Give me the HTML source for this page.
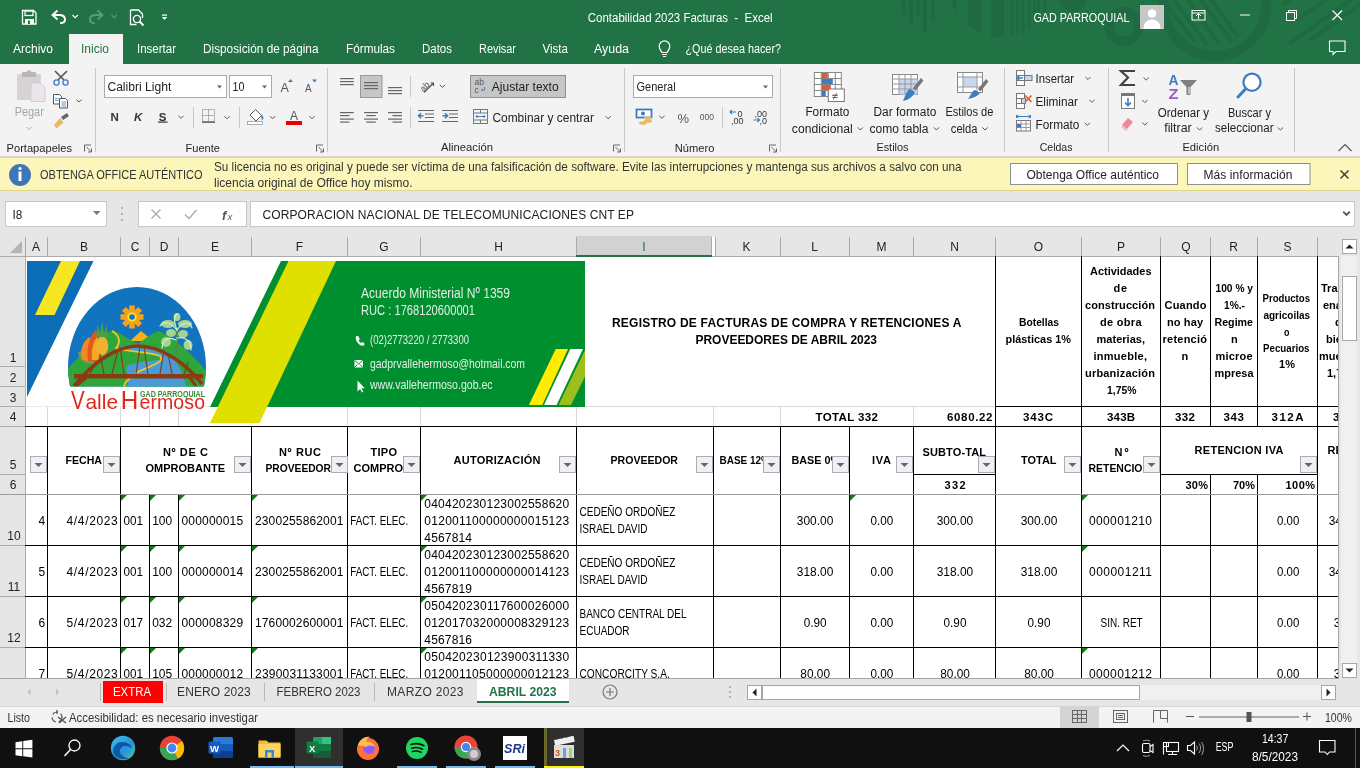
<!DOCTYPE html>
<html><head><meta charset="utf-8"><style>
html,body{margin:0;padding:0;width:1360px;height:768px;overflow:hidden;background:#fff}
svg{display:block;will-change:transform}
text{white-space:pre}
</style></head><body>
<svg width="1360" height="768" viewBox="0 0 1360 768">
<defs><clipPath id="cF"><rect x="252" y="426" width="79" height="68"/></clipPath><clipPath id="gridclip"><rect x="0" y="256" width="1338" height="422"/></clipPath></defs>
<rect x="0" y="0" width="1360" height="64" fill="#217346" />
<rect x="0" y="64" width="1360" height="92" fill="#f3f3f3" />
<rect x="0" y="156" width="1360" height="1" fill="#d8d8d8" />
<rect x="0" y="157" width="1360" height="34" fill="#fcf6bb" />
<rect x="0" y="157" width="1360" height="1" fill="#ddd590" />
<rect x="0" y="190" width="1360" height="1" fill="#ddd590" />
<rect x="0" y="191" width="1360" height="45" fill="#e6e6e6" />
<rect x="0" y="236" width="1339" height="20" fill="#e6e6e6" />
<rect x="25" y="256" width="1313" height="422" fill="#ffffff" />
<rect x="0" y="256" width="25" height="422" fill="#e6e6e6" />
<rect x="1338" y="236" width="22" height="442" fill="#e6e6e6" />
<rect x="0" y="678" width="1360" height="28" fill="#e6e6e6" />
<rect x="0" y="706" width="1360" height="22" fill="#f3f3f3" />
<rect x="0" y="728" width="1360" height="40" fill="#101010" />
<defs><clipPath id="tbclip"><rect x="0" y="0" width="1360" height="64"/></clipPath></defs>
<g clip-path="url(#tbclip)">
<circle cx="1215" cy="5" r="51" fill="none" stroke="#1f6943" stroke-width="10"/>
<circle cx="1123.5" cy="26.5" r="14.7" fill="none" stroke="#1f6943" stroke-width="9.4"/>
<g stroke="#1f6943" stroke-width="4">
<line x1="1167.8" y1="6.2" x2="1194.8" y2="41.7"/>
<line x1="1171.7" y1="-4" x2="1207" y2="44.8"/>
<line x1="1185.6" y1="-4" x2="1219.5" y2="44.8"/>
<line x1="1198" y1="-4" x2="1231.8" y2="41.7"/>
<line x1="1208.8" y1="-4" x2="1238" y2="37"/>
<line x1="1283" y1="5" x2="1294" y2="-3"/>
<line x1="1297" y1="20" x2="1328" y2="-2"/>
<line x1="1289" y1="44" x2="1352" y2="-1"/>
<line x1="1310" y1="40" x2="1365" y2="1"/>
</g>
<rect x="902" y="0" width="3.3999999999999773" height="15.4" fill="#1f6943" />
<rect x="909.3" y="0" width="3.6000000000000227" height="22.9" fill="#1f6943" />
<rect x="916.3" y="0" width="3.300000000000068" height="16.7" fill="#1f6943" />
<rect x="922.9" y="0" width="4.100000000000023" height="31.7" fill="#1f6943" />
<rect x="931.4" y="0" width="3.3999999999999773" height="19.8" fill="#1f6943" />
<rect x="991" y="0" width="13" height="37" fill="#1f6943" />
<rect x="1011" y="0" width="2.5" height="35.5" fill="#1f6943" />
<rect x="1016" y="0" width="2" height="34.7" fill="#1f6943" />
<rect x="1022" y="0" width="2.2999999999999545" height="32.4" fill="#1f6943" />
<rect x="1028" y="0" width="2.5" height="29.3" fill="#1f6943" />
<rect x="1033" y="0" width="2.5" height="24.7" fill="#1f6943" />
<rect x="1037.5" y="0" width="2.5" height="21.6" fill="#1f6943" />
<rect x="1043.5" y="0" width="2.5" height="13.9" fill="#1f6943" />
<rect x="1049" y="0" width="1.5" height="3" fill="#1f6943" />
<path d="M950.2 0L956.4 13.1V0Z" fill="#1f6943"/>
<path d="M968 0H981V32.4L968 25.5Z" fill="#1f6943"/>
<circle cx="1073" cy="-2" r="13.6" fill="#1f6943"/>
</g>
<path d="M22.5 10.5h11l2.5 2.5v11h-13.5z" fill="none" stroke="#fff" stroke-width="1.3"/><rect x="25" y="11" width="8" height="4.5" fill="none" stroke="#fff" stroke-width="1.2"/><rect x="25" y="19" width="9" height="5" fill="#fff"/><rect x="28" y="20.5" width="2" height="3.5" fill="#217346"/>
<path d="M57.5 10.5L52.5 15L57.5 19.5M53 15H59C63 15 65 17 65 19.5C65 22 63 23.2 60 23.2" fill="none" stroke="#fff" stroke-width="1.9"/>
<path d="M72.5 15l2.7 2.7 2.7-2.7" fill="none" stroke="#fff" stroke-width="1.1"/>
<path d="M97.5 10.5L102.5 15L97.5 19.5M102 15H96C92 15 90 17 90 19.5C90 22 92 23.2 95 23.2" fill="none" stroke="#5a9a74" stroke-width="1.9"/>
<path d="M111.5 15l2.7 2.7 2.7-2.7" fill="none" stroke="#5a9a74" stroke-width="1.1"/>
<path d="M130.5 10h8l4 4v4M130.5 10v14.5h6" fill="none" stroke="#fff" stroke-width="1.3"/><circle cx="137" cy="19" r="3.6" fill="none" stroke="#fff" stroke-width="1.4"/><path d="M139.5 21.5l4 4" stroke="#fff" stroke-width="1.8"/>
<rect x="162" y="14.5" width="5" height="1.2" fill="#fff"/><path d="M161.8 17h5.4l-2.7 3z" fill="#fff"/>
<text x="587.8" y="21.8" font-family="Liberation Sans" font-size="12" fill="#ffffff" text-anchor="start" textLength="184.8" lengthAdjust="spacingAndGlyphs" >Contabilidad 2023 Facturas  -  Excel</text>
<text x="1033.5" y="21.9" font-family="Liberation Sans" font-size="12" fill="#ffffff" text-anchor="start" textLength="96.0" lengthAdjust="spacingAndGlyphs" >GAD PARROQUIAL</text>
<rect x="1140" y="5" width="24" height="24" fill="#c6c6c6" />
<circle cx="1152" cy="13.5" r="4.2" fill="#fff"/><path d="M1143.5 29c0-6 3.5-9.5 8.5-9.5s8.5 3.5 8.5 9.5z" fill="#fff"/>
<rect x="1192" y="10.5" width="13" height="9.5" fill="none" stroke="#fff" stroke-width="1"/><path d="M1192 13h13" stroke="#fff"/><path d="M1198.5 19v-5M1196 16l2.5-2.5 2.5 2.5" fill="none" stroke="#fff" stroke-width="1"/>
<rect x="1240" y="14.5" width="10" height="1" fill="#ffffff" />
<rect x="1286.5" y="12.5" width="8" height="8" fill="none" stroke="#fff" stroke-width="1"/><path d="M1288.5 12.5v-2h8v8h-2" fill="none" stroke="#fff" stroke-width="1"/>
<path d="M1332.5 10.5l9.5 9.5M1342 10.5l-9.5 9.5" stroke="#fff" stroke-width="1.1"/>
<path d="M1329.5 41h15.5v10.5h-9l-3 3v-3h-3.5z" fill="none" stroke="#fff" stroke-width="1.1"/>
<rect x="69" y="34" width="54" height="30" fill="#f3f3f3" />
<text x="13.0" y="53.3" font-family="Liberation Sans" font-size="12.5" fill="#ffffff" textLength="40.0" lengthAdjust="spacingAndGlyphs" >Archivo</text>
<text x="137.0" y="53.3" font-family="Liberation Sans" font-size="12.5" fill="#ffffff" textLength="39.0" lengthAdjust="spacingAndGlyphs" >Insertar</text>
<text x="203.0" y="53.3" font-family="Liberation Sans" font-size="12.5" fill="#ffffff" textLength="115.5" lengthAdjust="spacingAndGlyphs" >Disposición de página</text>
<text x="346.0" y="53.3" font-family="Liberation Sans" font-size="12.5" fill="#ffffff" textLength="49.0" lengthAdjust="spacingAndGlyphs" >Fórmulas</text>
<text x="422.0" y="53.3" font-family="Liberation Sans" font-size="12.5" fill="#ffffff" textLength="30.0" lengthAdjust="spacingAndGlyphs" >Datos</text>
<text x="479.0" y="53.3" font-family="Liberation Sans" font-size="12.5" fill="#ffffff" textLength="37.0" lengthAdjust="spacingAndGlyphs" >Revisar</text>
<text x="542.5" y="53.3" font-family="Liberation Sans" font-size="12.5" fill="#ffffff" textLength="25.5" lengthAdjust="spacingAndGlyphs" >Vista</text>
<text x="594.0" y="53.3" font-family="Liberation Sans" font-size="12.5" fill="#ffffff" textLength="35.0" lengthAdjust="spacingAndGlyphs" >Ayuda</text>
<text x="685.5" y="53.3" font-family="Liberation Sans" font-size="12.5" fill="#ffffff" textLength="95.5" lengthAdjust="spacingAndGlyphs" >¿Qué desea hacer?</text>
<text x="81.0" y="53.3" font-family="Liberation Sans" font-size="12.5" fill="#217346" textLength="28.0" lengthAdjust="spacingAndGlyphs" >Inicio</text>
<path d="M662 52.5c-1-2-2.8-3.5-2.8-6.3a5.3 5.3 0 0 1 10.6 0c0 2.8-1.8 4.3-2.8 6.3z" fill="none" stroke="#fff" stroke-width="1.2"/><path d="M662 54.5h5M663 56.5h3" stroke="#fff" stroke-width="1.1"/>
<rect x="95" y="68" width="1" height="84" fill="#c8c8c8" />
<rect x="327" y="68" width="1" height="84" fill="#c8c8c8" />
<rect x="624" y="68" width="1" height="84" fill="#c8c8c8" />
<rect x="780" y="68" width="1" height="84" fill="#c8c8c8" />
<rect x="1004" y="68" width="1" height="84" fill="#c8c8c8" />
<rect x="1108" y="68" width="1" height="84" fill="#c8c8c8" />
<rect x="1294" y="68" width="1" height="84" fill="#c8c8c8" />
<path d="M84.5 151.5v-6.5h6.5M86.5 147.0l5 5M88 152.0h3.5v-3.5" fill="none" stroke="#666" stroke-width="1"/>
<path d="M316.5 151.5v-6.5h6.5M318.5 147.0l5 5M320 152.0h3.5v-3.5" fill="none" stroke="#666" stroke-width="1"/>
<path d="M613.5 151.5v-6.5h6.5M615.5 147.0l5 5M617 152.0h3.5v-3.5" fill="none" stroke="#666" stroke-width="1"/>
<path d="M769.5 151.5v-6.5h6.5M771.5 147.0l5 5M773 152.0h3.5v-3.5" fill="none" stroke="#666" stroke-width="1"/>
<text x="6.6" y="151.5" font-family="Liberation Sans" font-size="11.3" fill="#262626" textLength="65.4" lengthAdjust="spacingAndGlyphs" >Portapapeles</text>
<text x="185.5" y="151.5" font-family="Liberation Sans" font-size="11.3" fill="#262626" textLength="34.5" lengthAdjust="spacingAndGlyphs" >Fuente</text>
<text x="441.0" y="151.3" font-family="Liberation Sans" font-size="11.3" fill="#262626" textLength="52.0" lengthAdjust="spacingAndGlyphs" >Alineación</text>
<text x="674.8" y="151.5" font-family="Liberation Sans" font-size="11.3" fill="#262626" textLength="39.6" lengthAdjust="spacingAndGlyphs" >Número</text>
<text x="876.4" y="151.0" font-family="Liberation Sans" font-size="11.3" fill="#262626" textLength="32.1" lengthAdjust="spacingAndGlyphs" >Estilos</text>
<text x="1039.7" y="151.3" font-family="Liberation Sans" font-size="11.3" fill="#262626" textLength="32.8" lengthAdjust="spacingAndGlyphs" >Celdas</text>
<text x="1182.4" y="151.2" font-family="Liberation Sans" font-size="11.3" fill="#262626" textLength="36.8" lengthAdjust="spacingAndGlyphs" >Edición</text>
<rect x="17" y="74" width="24" height="26" rx="1.5" fill="#d6d2d6"/><rect x="22" y="72" width="14" height="5" rx="1" fill="#bcb6bc"/><rect x="27" y="70.5" width="4" height="3" fill="#bcb6bc"/>
<path d="M31 83h9.5l4.5 4.5v14H31z" fill="#ece6ec" stroke="#d3cdd3" stroke-width="1"/>
<text x="14.7" y="116.2" font-family="Liberation Sans" font-size="12.5" fill="#a6a6a6" textLength="29.1" lengthAdjust="spacingAndGlyphs" >Pegar</text>
<path d="M26.5 127l2.6 2.6 2.6-2.6" fill="none" stroke="#b0b0b0" stroke-width="1"/>
<path d="M55 71l9 9M67 71l-9 9" stroke="#555" stroke-width="1.6"/><circle cx="56.5" cy="82.5" r="2.6" fill="none" stroke="#3d7dc0" stroke-width="1.3"/><circle cx="65.5" cy="82.5" r="2.6" fill="none" stroke="#3d7dc0" stroke-width="1.3"/>
<path d="M53.5 94.5h6l2 2v7.5h-8z" fill="#fff" stroke="#555" stroke-width="1"/><path d="M59.5 98.5h6l2 2v7.5h-8z" fill="#fff" stroke="#555" stroke-width="1"/><path d="M55 98.5h3.5M55 100.5h3.5M61.5 102h4.5M61.5 104h4.5M61.5 106h4.5" stroke="#3d7dc0" stroke-width="0.8"/>
<path d="M76.5 99.5l2.6 2.6 2.6-2.6" fill="none" stroke="#555" stroke-width="1"/>
<path d="M61 117l6-4 2 3-6 4z" fill="#666"/><path d="M54 125l6-7 3.5 4.5-7 6z" fill="#e8b96a"/>
<rect x="104.5" y="75.5" width="122" height="22" fill="#fff" stroke="#aaa" stroke-width="1"/>
<text x="107.4" y="90.5" font-family="Liberation Sans" font-size="12.5" fill="#222" textLength="63.9" lengthAdjust="spacingAndGlyphs" >Calibri Light</text>
<path d="M217 85.5h5l-2.5 3z" fill="#666"/>
<rect x="229.5" y="75.5" width="42" height="22" fill="#fff" stroke="#aaa" stroke-width="1"/>
<text x="232.5" y="90.6" font-family="Liberation Sans" font-size="12.5" fill="#222" textLength="11.9" lengthAdjust="spacingAndGlyphs" >10</text>
<path d="M262 85.5h5l-2.5 3z" fill="#666"/>
<text x="280.6" y="91.8" font-family="Liberation Sans" font-size="12.5" fill="#555" textLength="8.8" lengthAdjust="spacing" >A</text>
<path d="M288 82h5l-2.5-3z" fill="#3d7dc0"/>
<text x="305.0" y="91.8" font-family="Liberation Sans" font-size="10" fill="#555" textLength="7.5" lengthAdjust="spacing" >A</text>
<path d="M312 79.5h5l-2.5 3z" fill="#3d7dc0"/>
<text x="110.6" y="120.6" font-family="Liberation Sans" font-size="11.5" fill="#333" font-weight="bold" textLength="8.8" lengthAdjust="spacing" >N</text>
<text x="134.0" y="120.6" font-family="Liberation Sans" font-size="11.5" fill="#333" font-weight="bold" textLength="8.4" lengthAdjust="spacing" font-style="italic">K</text>
<text x="158.8" y="120.6" font-family="Liberation Sans" font-size="11.5" fill="#333" font-weight="bold" textLength="8.2" lengthAdjust="spacing" >S</text>
<rect x="158" y="121.5" width="9.5" height="1.2" fill="#333" />
<path d="M178.4 115.8l2.6 2.6 2.6-2.6" fill="none" stroke="#555" stroke-width="1"/>
<rect x="193" y="107" width="1" height="21" fill="#c8c8c8" />
<rect x="239" y="107" width="1" height="21" fill="#c8c8c8" />
<rect x="202.5" y="109.5" width="12" height="12" fill="none" stroke="#777" stroke-width="1" stroke-dasharray="1 1"/><path d="M208.5 109.5v12M202.5 115.5h12" stroke="#777" stroke-width="1" stroke-dasharray="1 1"/><rect x="202" y="121.5" width="13" height="1.3" fill="#555"/>
<path d="M224.4 116.2l2.6 2.6 2.6-2.6" fill="none" stroke="#555" stroke-width="1"/>
<path d="M250 115l5.5-5.5 6 6-5.5 5.5z" fill="#fff" stroke="#555" stroke-width="1"/><path d="M261.5 115.5c1 1 1.5 2.5.5 4" stroke="#3d7dc0" stroke-width="1.6" fill="none"/><rect x="247.5" y="121.5" width="15" height="3" fill="#fff" stroke="#999" stroke-width="0.8"/>
<path d="M270 116.2l2.6 2.6 2.6-2.6" fill="none" stroke="#555" stroke-width="1"/>
<text x="290.0" y="120.0" font-family="Liberation Sans" font-size="12" fill="#555" textLength="8.8" lengthAdjust="spacing" >A</text>
<rect x="286" y="121" width="16" height="4" fill="#ee0000" />
<path d="M309.4 116.2l2.6 2.6 2.6-2.6" fill="none" stroke="#555" stroke-width="1"/>
<rect x="340" y="78" width="13.75" height="1.2" fill="#666" />
<rect x="340" y="81" width="13.75" height="1.2" fill="#666" />
<rect x="340" y="84" width="13.75" height="1.2" fill="#666" />
<rect x="360.5" y="75.5" width="21.5" height="22" fill="#c6c6c6" stroke="#999" stroke-width="1"/>
<rect x="364" y="82" width="14" height="1.2" fill="#666" />
<rect x="364" y="85" width="14" height="1.2" fill="#666" />
<rect x="364" y="88" width="14" height="1.2" fill="#666" />
<rect x="388" y="87" width="14" height="1.2" fill="#666" />
<rect x="388" y="90" width="14" height="1.2" fill="#666" />
<rect x="388" y="93" width="14" height="1.2" fill="#666" />
<rect x="410" y="76" width="1" height="21" fill="#c8c8c8" />
<rect x="410" y="107" width="1" height="21" fill="#c8c8c8" />
<text x="419" y="90" font-family="Liberation Sans" font-size="9" fill="#555" transform="rotate(-45 424 86)">ab</text><path d="M424 92.5l9.5-9.5M430.5 83h3v3" fill="none" stroke="#555" stroke-width="1.2"/>
<path d="M439.8 84.8l2.6 2.6 2.6-2.6" fill="none" stroke="#555" stroke-width="1"/>
<rect x="340" y="112" width="13.75" height="1.2" fill="#666" />
<rect x="340" y="115" width="9.5" height="1.2" fill="#666" />
<rect x="340" y="118.5" width="13.75" height="1.2" fill="#666" />
<rect x="340" y="121.5" width="9.5" height="1.2" fill="#666" />
<rect x="364.0" y="112" width="14" height="1.2" fill="#666" />
<rect x="388" y="112" width="14" height="1.2" fill="#666" />
<rect x="366.25" y="115" width="9.5" height="1.2" fill="#666" />
<rect x="392.5" y="115" width="9.5" height="1.2" fill="#666" />
<rect x="364.0" y="118.5" width="14" height="1.2" fill="#666" />
<rect x="388" y="118.5" width="14" height="1.2" fill="#666" />
<rect x="366.25" y="121.5" width="9.5" height="1.2" fill="#666" />
<rect x="392.5" y="121.5" width="9.5" height="1.2" fill="#666" />
<path d="M418 110.5h16M425 114h9M425 117.5h9M418 121.5h16" stroke="#666" stroke-width="1.2"/><path d="M418.5 115.8h5M421 113.3l-2.5 2.5 2.5 2.5" fill="none" stroke="#3d7dc0" stroke-width="1.6"/>
<path d="M442 110.5h16M449 114h9M449 117.5h9M442 121.5h16" stroke="#666" stroke-width="1.2"/><path d="M442.5 115.8h5M445 113.3l2.5 2.5-2.5 2.5" fill="none" stroke="#3d7dc0" stroke-width="1.6"/>
<rect x="470.5" y="75.5" width="95" height="22" fill="#c6c6c6" stroke="#8f8f8f" stroke-width="1"/>
<text x="474.5" y="85" font-family="Liberation Sans" font-size="8.5" fill="#555">ab</text><text x="474.5" y="92.5" font-family="Liberation Sans" font-size="8.5" fill="#555">c</text><path d="M484.5 87v3h-3M482.5 89l-1 1 1 1" fill="none" stroke="#3d7dc0" stroke-width="0.9"/>
<text x="491.8" y="90.5" font-family="Liberation Sans" font-size="12.5" fill="#222" textLength="66.8" lengthAdjust="spacingAndGlyphs" >Ajustar texto</text>
<rect x="473.5" y="109.5" width="14" height="14" fill="none" stroke="#777" stroke-width="1"/><path d="M473.5 113h14M473.5 120h14M480.5 109.5v3.5M480.5 120v3.5" stroke="#777" stroke-width="1"/><path d="M476 116.5h9M477.5 115l-1.5 1.5 1.5 1.5M483.5 115l1.5 1.5-1.5 1.5" fill="none" stroke="#3d7dc0" stroke-width="1"/>
<text x="492.4" y="121.6" font-family="Liberation Sans" font-size="12.5" fill="#222" textLength="101.6" lengthAdjust="spacingAndGlyphs" >Combinar y centrar</text>
<path d="M605.6 116.3l2.6 2.6 2.6-2.6" fill="none" stroke="#555" stroke-width="1"/>
<rect x="633.5" y="75.5" width="139" height="22" fill="#fff" stroke="#aaa" stroke-width="1"/>
<text x="636.5" y="90.6" font-family="Liberation Sans" font-size="12.5" fill="#222" textLength="39.1" lengthAdjust="spacingAndGlyphs" >General</text>
<path d="M763 85.5h5l-2.5 3z" fill="#666"/>
<rect x="636.5" y="109.5" width="15" height="8" fill="#fff" stroke="#3d7dc0" stroke-width="1.8"/><circle cx="643" cy="113.5" r="2" fill="#3d7dc0"/><ellipse cx="648" cy="118" rx="4" ry="1.8" fill="#e8b96a"/><ellipse cx="648" cy="121" rx="4" ry="1.8" fill="#e8b96a"/><ellipse cx="643" cy="123" rx="4" ry="1.8" fill="#e8b96a"/>
<path d="M659.4 115.8l2.6 2.6 2.6-2.6" fill="none" stroke="#555" stroke-width="1"/>
<text x="677.5" y="122.7" font-family="Liberation Sans" font-size="13" fill="#555" textLength="12.5" lengthAdjust="spacing" >%</text>
<text x="699.8" y="120.0" font-family="Liberation Sans" font-size="9.5" fill="#555" textLength="14.2" lengthAdjust="spacingAndGlyphs" >000</text>
<rect x="722" y="107" width="1" height="21" fill="#c8c8c8" />
<path d="M730 112h6M732 110l-2 2 2 2" fill="none" stroke="#3d7dc0" stroke-width="1.2"/>
<text x="737.5" y="117.0" font-family="Liberation Sans" font-size="9" fill="#333" text-anchor="start" >0</text>
<text x="731.0" y="124.0" font-family="Liberation Sans" font-size="9" fill="#333" text-anchor="start" >,00</text>
<text x="754.5" y="116.5" font-family="Liberation Sans" font-size="9" fill="#333" text-anchor="start" >,00</text>
<text x="759.5" y="124.0" font-family="Liberation Sans" font-size="9" fill="#333" text-anchor="start" >,0</text>
<path d="M753.5 120h6M757.5 118l2 2-2 2" fill="none" stroke="#3d7dc0" stroke-width="1.2"/>
<g transform="translate(813.8 72)"><rect x="0.5" y="0.5" width="27" height="24" fill="#fff" stroke="#888" stroke-width="1"/><path d="M0.5 6.5h27M0.5 12.5h27M0.5 18.5h27M7.5 0.5v24M14.5 0.5v24M21.5 0.5v24" stroke="#888" stroke-width="1"/><rect x="8" y="1" width="6" height="5" fill="#e05a36"/><rect x="8" y="7" width="11" height="5" fill="#3d7dc0"/><rect x="8" y="13" width="9" height="5" fill="#e05a36"/><rect x="8" y="19" width="4" height="5" fill="#3d7dc0"/><rect x="14.5" y="17" width="16" height="12.5" fill="#fff" stroke="#777" stroke-width="1"/><text x="18" y="27.5" font-family="Liberation Sans" font-size="11" fill="#444">≠</text></g>
<g transform="translate(892 74)"><rect x="0.5" y="0.5" width="25" height="20" fill="#fff" stroke="#888"/><rect x="7" y="5" width="18.5" height="15.5" fill="#c5d8ee"/><path d="M0.5 5h25M0.5 10h25M0.5 15h25M7 0.5v20M13 0.5v20M19 0.5v20" stroke="#999" stroke-width="1"/><path d="M29 4l-8 10 2.5 2.5 8-10z" fill="#777"/><path d="M18 15c-3 1-4 5-7 12 5-1 10-4 12-9z" fill="#3d7dc0"/></g>
<g transform="translate(957 72)"><rect x="0.5" y="0.5" width="25" height="20" fill="#fff" stroke="#888"/><rect x="6" y="5" width="14" height="10" fill="#c5d8ee"/><path d="M0.5 5h25M0.5 15h25M6 0.5v20M20 0.5v20" stroke="#999" stroke-width="1"/><path d="M29 7l-8 10 2.5 2.5 8-10z" fill="#777"/><path d="M18 18c-3 1-4 5-7 9 5-1 10-3 12-6z" fill="#3d7dc0"/></g>
<text x="805.4" y="116.4" font-family="Liberation Sans" font-size="12.5" fill="#222" textLength="43.9" lengthAdjust="spacingAndGlyphs" >Formato</text>
<text x="791.8" y="132.5" font-family="Liberation Sans" font-size="12.5" fill="#222" textLength="60.9" lengthAdjust="spacingAndGlyphs" >condicional</text>
<path d="M857.8 127.4l2.6 2.6 2.6-2.6" fill="none" stroke="#555" stroke-width="1"/>
<text x="873.4" y="116.4" font-family="Liberation Sans" font-size="12.5" fill="#222" textLength="63.0" lengthAdjust="spacingAndGlyphs" >Dar formato</text>
<text x="869.6" y="132.5" font-family="Liberation Sans" font-size="12.5" fill="#222" textLength="58.9" lengthAdjust="spacingAndGlyphs" >como tabla</text>
<path d="M933.8 127.4l2.6 2.6 2.6-2.6" fill="none" stroke="#555" stroke-width="1"/>
<text x="945.4" y="116.4" font-family="Liberation Sans" font-size="12.5" fill="#222" textLength="48.0" lengthAdjust="spacingAndGlyphs" >Estilos de</text>
<text x="950.8" y="132.5" font-family="Liberation Sans" font-size="12.5" fill="#222" textLength="26.7" lengthAdjust="spacingAndGlyphs" >celda</text>
<path d="M982.4 127.4l2.6 2.6 2.6-2.6" fill="none" stroke="#555" stroke-width="1"/>
<g stroke="#777" stroke-width="1" fill="#fff"><rect x="1016.5" y="70.5" width="8" height="5"/><rect x="1016.5" y="75.5" width="8" height="5"/><rect x="1016.5" y="80.5" width="8" height="5"/><rect x="1024.5" y="75.5" width="7.5" height="5" fill="#c5d8ee"/></g><path d="M1017 78h6M1019.5 75.5l-2.5 2.5 2.5 2.5" fill="none" stroke="#3d7dc0" stroke-width="1.5"/>
<text x="1035.5" y="82.5" font-family="Liberation Sans" font-size="12.5" fill="#222" textLength="38.5" lengthAdjust="spacingAndGlyphs" >Insertar</text>
<path d="M1085.4 77l2.6 2.6 2.6-2.6" fill="none" stroke="#555" stroke-width="1"/>
<g stroke="#777" stroke-width="1" fill="#fff"><rect x="1016.5" y="93.5" width="8" height="5"/><rect x="1016.5" y="98.5" width="8" height="5"/><rect x="1016.5" y="103.5" width="8" height="5"/><rect x="1021.5" y="98.5" width="4" height="5" fill="#c5d8ee"/></g><path d="M1025 95.5l6.5 6.5M1031.5 95.5l-6.5 6.5" stroke="#e05a36" stroke-width="1.6"/>
<text x="1035.5" y="105.7" font-family="Liberation Sans" font-size="12.5" fill="#222" textLength="42.5" lengthAdjust="spacingAndGlyphs" >Eliminar</text>
<path d="M1089.3 99.8l2.6 2.6 2.6-2.6" fill="none" stroke="#555" stroke-width="1"/>
<g stroke="#777" stroke-width="1" fill="#fff"><rect x="1016.5" y="120.5" width="14" height="10.5"/></g><path d="M1016.5 124h14M1016.5 127.5h14M1021 120.5v10.5M1026 120.5v10.5" stroke="#999"/><rect x="1017" y="124" width="4" height="3.5" fill="#3d7dc0"/><path d="M1016.5 116.5h14M1018.5 115l-2 1.5 2 1.5M1028.5 115l2 1.5-2 1.5M1016.5 115v3M1030.5 115v3" fill="none" stroke="#3d7dc0" stroke-width="1"/>
<text x="1035.5" y="128.6" font-family="Liberation Sans" font-size="12.5" fill="#222" textLength="43.9" lengthAdjust="spacingAndGlyphs" >Formato</text>
<path d="M1084.7 122.8l2.6 2.6 2.6-2.6" fill="none" stroke="#555" stroke-width="1"/>
<path d="M1135 71h-14l7 6.5-7 7.5h14" fill="none" stroke="#444" stroke-width="2.2"/>
<path d="M1143.6 77.5l2.6 2.6 2.6-2.6" fill="none" stroke="#555" stroke-width="1"/>
<rect x="1121.5" y="93.5" width="13" height="15" fill="#fff" stroke="#777"/><rect x="1121" y="93" width="14" height="3" fill="#777"/><path d="M1128 98v7M1125 102.5l3 3 3-3" fill="none" stroke="#3d7dc0" stroke-width="1.6"/>
<path d="M1142.3 100l2.6 2.6 2.6-2.6" fill="none" stroke="#555" stroke-width="1"/>
<path d="M1128 118l5 4-6 7-5-4z" fill="#e88a9a"/><path d="M1121 127l5 4 1.5-1.5-5-4z" fill="#f2b8c2"/>
<path d="M1142.3 122.5l2.6 2.6 2.6-2.6" fill="none" stroke="#555" stroke-width="1"/>
<text x="1168.5" y="84.8" font-family="Liberation Sans" font-size="15.5" fill="#3d7dc0" font-weight="bold" text-anchor="start" textLength="10.0" lengthAdjust="spacingAndGlyphs" >A</text>
<text x="1168.5" y="98.7" font-family="Liberation Sans" font-size="15.5" fill="#9b59c6" font-weight="bold" text-anchor="start" textLength="10.0" lengthAdjust="spacingAndGlyphs" >Z</text>
<path d="M1180 80h17l-6.5 7v8h-4v-8z" fill="#808080"/><path d="M1189 87v7" stroke="#fff" stroke-width="1"/>
<text x="1157.7" y="116.5" font-family="Liberation Sans" font-size="12.5" fill="#222" textLength="51.3" lengthAdjust="spacingAndGlyphs" >Ordenar y</text>
<text x="1164.2" y="132.4" font-family="Liberation Sans" font-size="12.5" fill="#222" textLength="27.5" lengthAdjust="spacingAndGlyphs" >filtrar</text>
<path d="M1197 127.5l2.6 2.6 2.6-2.6" fill="none" stroke="#555" stroke-width="1"/>
<circle cx="1252" cy="82.2" r="8.6" fill="#fff" stroke="#3d7dc0" stroke-width="2.2"/><path d="M1245.5 89l-7.5 8" stroke="#3d7dc0" stroke-width="3" stroke-linecap="round"/>
<text x="1228.0" y="116.5" font-family="Liberation Sans" font-size="12.5" fill="#222" textLength="43.0" lengthAdjust="spacingAndGlyphs" >Buscar y</text>
<text x="1214.9" y="132.4" font-family="Liberation Sans" font-size="12.5" fill="#222" textLength="58.6" lengthAdjust="spacingAndGlyphs" >seleccionar</text>
<path d="M1277.8 127.5l2.6 2.6 2.6-2.6" fill="none" stroke="#555" stroke-width="1"/>
<path d="M1338.5 151l6.5-6.5 6.5 6.5" fill="none" stroke="#555" stroke-width="1.1"/>
<circle cx="20" cy="175" r="11" fill="#3e76ba"/><circle cx="20" cy="168.5" r="1.6" fill="#fff"/><rect x="18.5" y="171.5" width="3" height="9.5" fill="#fff"/>
<text x="40.0" y="179.0" font-family="Liberation Sans" font-size="12" fill="#333" textLength="162.5" lengthAdjust="spacingAndGlyphs" >OBTENGA OFFICE AUTÉNTICO</text>
<text x="214.0" y="171.3" font-family="Liberation Sans" font-size="12" fill="#333" textLength="747.5" lengthAdjust="spacingAndGlyphs" >Su licencia no es original y puede ser víctima de una falsificación de software. Evite las interrupciones y mantenga sus archivos a salvo con una</text>
<text x="214.0" y="187.3" font-family="Liberation Sans" font-size="12" fill="#333" textLength="198.5" lengthAdjust="spacing" >licencia original de Office hoy mismo.</text>
<rect x="1010.5" y="163.5" width="167" height="21" fill="#fff" stroke="#8f8f8f" stroke-width="1"/>
<text x="1026.5" y="179.0" font-family="Liberation Sans" font-size="12" fill="#222" textLength="132.5" lengthAdjust="spacingAndGlyphs" >Obtenga Office auténtico</text>
<rect x="1187.5" y="163.5" width="122.5" height="21" fill="#fff" stroke="#8f8f8f" stroke-width="1"/>
<text x="1203.5" y="179.0" font-family="Liberation Sans" font-size="12" fill="#222" textLength="89.0" lengthAdjust="spacing" >Más información</text>
<path d="M1340.5 170.5l8 8M1348.5 170.5l-8 8" stroke="#444" stroke-width="1.6"/>
<rect x="5.5" y="201.5" width="101" height="25" fill="#fff" stroke="#c6c6c6" stroke-width="1"/>
<text x="12.5" y="219.0" font-family="Liberation Sans" font-size="12" fill="#222" textLength="9.8" lengthAdjust="spacingAndGlyphs" >I8</text>
<path d="M93 211h7.5l-3.75 4z" fill="#777"/>
<circle cx="122" cy="208" r="0.9" fill="#999"/><circle cx="122" cy="214" r="0.9" fill="#999"/><circle cx="122" cy="220" r="0.9" fill="#999"/>
<rect x="138.5" y="201.5" width="108" height="25" fill="#fff" stroke="#c6c6c6" stroke-width="1"/>
<path d="M151.5 209.5l9 9M160.5 209.5l-9 9" stroke="#aaa" stroke-width="1.3"/><path d="M185 214.5l4 4 7.5-8.5" fill="none" stroke="#aaa" stroke-width="1.3"/>
<text x="222.0" y="219.5" font-family="Liberation Sans" font-size="13" fill="#555" text-anchor="start" font-style="italic" font-family="Liberation Serif" font-weight="bold">f</text>
<text x="227.5" y="219.5" font-family="Liberation Sans" font-size="9.5" fill="#555" text-anchor="start" font-style="italic">x</text>
<rect x="250.5" y="201.5" width="1104" height="25" fill="#fff" stroke="#c6c6c6" stroke-width="1"/>
<text x="262.5" y="218.5" font-family="Liberation Sans" font-size="12" fill="#222" textLength="371.5" lengthAdjust="spacing" >CORPORACION NACIONAL DE TELECOMUNICACIONES CNT EP</text>
<path d="M1343.2 211.6l3.3 3.4 3.3-3.4" fill="none" stroke="#555" stroke-width="1.8"/>
<path d="M10 253h12v-12z" fill="#b4b4b4"/>
<rect x="576" y="236" width="136" height="20" fill="#d2d2d2" />
<rect x="25" y="237" width="1" height="19" fill="#ababab" />
<rect x="47" y="237" width="1" height="19" fill="#ababab" />
<rect x="120" y="237" width="1" height="19" fill="#ababab" />
<rect x="149" y="237" width="1" height="19" fill="#ababab" />
<rect x="178" y="237" width="1" height="19" fill="#ababab" />
<rect x="251" y="237" width="1" height="19" fill="#ababab" />
<rect x="347" y="237" width="1" height="19" fill="#ababab" />
<rect x="420" y="237" width="1" height="19" fill="#ababab" />
<rect x="576" y="237" width="1" height="19" fill="#ababab" />
<rect x="711" y="237" width="1" height="19" fill="#ababab" />
<rect x="715" y="237" width="1" height="19" fill="#ababab" />
<rect x="780" y="237" width="1" height="19" fill="#ababab" />
<rect x="849" y="237" width="1" height="19" fill="#ababab" />
<rect x="913" y="237" width="1" height="19" fill="#ababab" />
<rect x="995" y="237" width="1" height="19" fill="#ababab" />
<rect x="1081" y="237" width="1" height="19" fill="#ababab" />
<rect x="1160" y="237" width="1" height="19" fill="#ababab" />
<rect x="1210" y="237" width="1" height="19" fill="#ababab" />
<rect x="1257" y="237" width="1" height="19" fill="#ababab" />
<rect x="1317" y="237" width="1" height="19" fill="#ababab" />
<rect x="712" y="237" width="3" height="19" fill="#ffffff" />
<rect x="711" y="237" width="1" height="19" fill="#ababab" />
<rect x="715" y="237" width="1" height="19" fill="#ababab" />
<rect x="0" y="256" width="1339" height="1" fill="#ababab" />
<rect x="576" y="255" width="136" height="2" fill="#217346" />
<text x="36.0" y="251.0" font-family="Liberation Sans" font-size="12" fill="#222" text-anchor="middle" >A</text>
<text x="84.0" y="251.0" font-family="Liberation Sans" font-size="12" fill="#222" text-anchor="middle" >B</text>
<text x="135.0" y="251.0" font-family="Liberation Sans" font-size="12" fill="#222" text-anchor="middle" >C</text>
<text x="164.0" y="251.0" font-family="Liberation Sans" font-size="12" fill="#222" text-anchor="middle" >D</text>
<text x="215.0" y="251.0" font-family="Liberation Sans" font-size="12" fill="#222" text-anchor="middle" >E</text>
<text x="299.5" y="251.0" font-family="Liberation Sans" font-size="12" fill="#222" text-anchor="middle" >F</text>
<text x="384.0" y="251.0" font-family="Liberation Sans" font-size="12" fill="#222" text-anchor="middle" >G</text>
<text x="498.5" y="251.0" font-family="Liberation Sans" font-size="12" fill="#222" text-anchor="middle" >H</text>
<text x="746.5" y="251.0" font-family="Liberation Sans" font-size="12" fill="#222" text-anchor="middle" >K</text>
<text x="814.5" y="251.0" font-family="Liberation Sans" font-size="12" fill="#222" text-anchor="middle" >L</text>
<text x="881.5" y="251.0" font-family="Liberation Sans" font-size="12" fill="#222" text-anchor="middle" >M</text>
<text x="954.5" y="251.0" font-family="Liberation Sans" font-size="12" fill="#222" text-anchor="middle" >N</text>
<text x="1038.5" y="251.0" font-family="Liberation Sans" font-size="12" fill="#222" text-anchor="middle" >O</text>
<text x="1121.0" y="251.0" font-family="Liberation Sans" font-size="12" fill="#222" text-anchor="middle" >P</text>
<text x="1186.0" y="251.0" font-family="Liberation Sans" font-size="12" fill="#222" text-anchor="middle" >Q</text>
<text x="1233.5" y="251.0" font-family="Liberation Sans" font-size="12" fill="#222" text-anchor="middle" >R</text>
<text x="1287.5" y="251.0" font-family="Liberation Sans" font-size="12" fill="#222" text-anchor="middle" >S</text>
<text x="644.0" y="251.0" font-family="Liberation Sans" font-size="12" fill="#217346" text-anchor="middle" >I</text>
<rect x="25" y="256" width="1" height="422" fill="#ababab" />
<rect x="0" y="366" width="25" height="1" fill="#ababab" />
<rect x="0" y="386" width="25" height="1" fill="#ababab" />
<rect x="0" y="406" width="25" height="1" fill="#ababab" />
<rect x="0" y="426" width="25" height="1" fill="#ababab" />
<rect x="0" y="474" width="25" height="1" fill="#ababab" />
<rect x="0" y="494" width="25" height="1" fill="#ababab" />
<rect x="0" y="545" width="25" height="1" fill="#ababab" />
<rect x="0" y="596" width="25" height="1" fill="#ababab" />
<rect x="0" y="647" width="25" height="1" fill="#ababab" />
<rect x="0" y="494" width="25" height="1" fill="#9b9b9b" />
<text x="13.0" y="362.0" font-family="Liberation Sans" font-size="12" fill="#222" text-anchor="middle" >1</text>
<text x="13.0" y="381.5" font-family="Liberation Sans" font-size="12" fill="#222" text-anchor="middle" >2</text>
<text x="13.0" y="401.5" font-family="Liberation Sans" font-size="12" fill="#222" text-anchor="middle" >3</text>
<text x="13.0" y="421.0" font-family="Liberation Sans" font-size="12" fill="#222" text-anchor="middle" >4</text>
<text x="13.0" y="469.0" font-family="Liberation Sans" font-size="12" fill="#222" text-anchor="middle" >5</text>
<text x="13.0" y="489.0" font-family="Liberation Sans" font-size="12" fill="#222" text-anchor="middle" >6</text>
<text x="14.0" y="540.0" font-family="Liberation Sans" font-size="12" fill="#222" text-anchor="middle" >10</text>
<text x="14.0" y="591.0" font-family="Liberation Sans" font-size="12" fill="#222" text-anchor="middle" >11</text>
<text x="14.0" y="642.0" font-family="Liberation Sans" font-size="12" fill="#222" text-anchor="middle" >12</text>
<rect x="1341" y="256" width="16" height="422" fill="#f0f0f0" />
<rect x="1342.5" y="239.5" width="14" height="14" fill="#fff" stroke="#a6a6a6" stroke-width="1"/><path d="M1345.5 248.5h8l-4-4z" fill="#222"/>
<rect x="1342.5" y="276.5" width="14" height="64" fill="#fff" stroke="#a6a6a6" stroke-width="1"/>
<rect x="1342.5" y="663.5" width="14" height="14" fill="#fff" stroke="#a6a6a6" stroke-width="1"/><path d="M1345.5 668.5h8l-4 4z" fill="#222"/>
<path d="M30.5 688.5l-3 3.5 3 3.5" fill="#c0c0c0"/><path d="M56 688.5l3 3.5-3 3.5" fill="#c0c0c0"/>
<rect x="100" y="683" width="1" height="18" fill="#b8b8b8" />
<rect x="166" y="683" width="1" height="18" fill="#b8b8b8" />
<rect x="264" y="683" width="1" height="18" fill="#b8b8b8" />
<rect x="374" y="683" width="1" height="18" fill="#b8b8b8" />
<rect x="103" y="681" width="60" height="22" fill="#ff0000" />
<text x="113.0" y="696.0" font-family="Liberation Sans" font-size="12" fill="#fff" textLength="38.0" lengthAdjust="spacingAndGlyphs" >EXTRA</text>
<text x="177.0" y="696.0" font-family="Liberation Sans" font-size="12" fill="#333" textLength="73.8" lengthAdjust="spacing" >ENERO 2023</text>
<text x="276.5" y="696.0" font-family="Liberation Sans" font-size="12" fill="#333" textLength="84.0" lengthAdjust="spacingAndGlyphs" >FEBRERO 2023</text>
<text x="387.0" y="696.0" font-family="Liberation Sans" font-size="12" fill="#333" textLength="76.5" lengthAdjust="spacing" >MARZO 2023</text>
<rect x="477" y="678" width="92" height="25" fill="#ffffff" />
<rect x="477" y="701" width="92" height="2" fill="#217346" />
<text x="489.0" y="696.0" font-family="Liberation Sans" font-size="12.5" fill="#217346" font-weight="bold" textLength="67.5" lengthAdjust="spacingAndGlyphs" >ABRIL 2023</text>
<circle cx="610" cy="692" r="7" fill="none" stroke="#777" stroke-width="1.2"/><path d="M606 692h8M610 688v8" stroke="#777" stroke-width="1.2"/>
<circle cx="730" cy="687" r="0.9" fill="#999"/><circle cx="730" cy="692" r="0.9" fill="#999"/><circle cx="730" cy="697" r="0.9" fill="#999"/>
<rect x="747" y="685" width="574" height="15" fill="#f0f0f0" />
<rect x="747.5" y="685.5" width="14" height="14" fill="#fff" stroke="#a6a6a6" stroke-width="1"/><path d="M756.5 688.5v8l-4-4z" fill="#222"/>
<rect x="762.5" y="685.5" width="377" height="14" fill="#fff" stroke="#a6a6a6" stroke-width="1"/>
<rect x="1321.5" y="685.5" width="14" height="14" fill="#fff" stroke="#a6a6a6" stroke-width="1"/><path d="M1326.5 688.5v8l4-4z" fill="#222"/>
<rect x="0" y="706" width="1360" height="1" fill="#d6d6d6" />
<text x="7.5" y="721.5" font-family="Liberation Sans" font-size="12" fill="#333" textLength="22.5" lengthAdjust="spacingAndGlyphs" >Listo</text>
<circle cx="57" cy="717" r="5" fill="none" stroke="#555" stroke-width="1.2" stroke-dasharray="6 3"/><path d="M57 710v4M58 717l8 6M66 717l-7 6" stroke="#555" stroke-width="1.3"/>
<text x="69.0" y="721.5" font-family="Liberation Sans" font-size="12" fill="#333" textLength="189.0" lengthAdjust="spacingAndGlyphs" >Accesibilidad: es necesario investigar</text>
<rect x="1060" y="706" width="39" height="22" fill="#d4d4d4" />
<g fill="none" stroke="#666" stroke-width="1"><rect x="1072.5" y="710.5" width="14" height="12"/><path d="M1072.5 714.5h14M1072.5 718.5h14M1077.5 710.5v12M1081.5 710.5v12"/><rect x="1113.5" y="710.5" width="14" height="12"/><rect x="1116.5" y="713.5" width="8" height="6"/><path d="M1118 715.5h5M1118 717.5h5"/><path d="M1153.5 722.5v-12h14v12"/><path d="M1160.5 710.5v8h7"/></g>
<rect x="1186" y="716" width="8" height="1" fill="#555" />
<rect x="1199" y="716.5" width="100" height="1" fill="#666" />
<rect x="1246.5" y="712" width="5" height="10" fill="#555" />
<rect x="1303" y="716" width="8" height="1" fill="#555" />
<rect x="1306.5" y="712.5" width="1" height="8" fill="#555" />
<text x="1325.0" y="721.5" font-family="Liberation Sans" font-size="12" fill="#333" textLength="27.0" lengthAdjust="spacingAndGlyphs" >100%</text>
<path d="M15.5 742.2l6.8-1v7h-6.8zM23.2 741.1l9.2-1.3v8.4h-9.2zM15.5 749.2h6.8v7l-6.8-1zM23.2 749.2h9.2v8.4l-9.2-1.3z" fill="#fff"/>
<circle cx="74.5" cy="745.5" r="5.5" fill="none" stroke="#fff" stroke-width="1.3"/><path d="M70.5 749.5l-6 6.5" stroke="#fff" stroke-width="1.5"/>
<defs><linearGradient id="edg" x1="0" y1="0" x2="1" y2="1"><stop offset="0" stop-color="#35c1f1"/><stop offset="0.6" stop-color="#2b8fd9"/><stop offset="1" stop-color="#55d77a"/></linearGradient></defs>
<circle cx="123" cy="748" r="12.2" fill="url(#edg)"/><path d="M113 752c2 6 10 9 16 6-5 0-9-3-9-7 0-3 3-5 6-5 4 0 6 3 6 3 0-4-5-7-10-7-6 0-9 5-9 10z" fill="#0c59a4"/><circle cx="128" cy="751" r="3" fill="#1f9fe6"/>
<circle cx="172" cy="748" r="12.2" fill="#e94335"/><path d="M172 748L161.4 754.1A12.2 12.2 0 0 0 178.1 758.6z" fill="#34a853"/><path d="M172 748L178.1 758.6A12.2 12.2 0 0 0 184.2 748 L172 748z" fill="#fbbc04"/><path d="M172 748L161.4 754.1A12.2 12.2 0 0 1 166 737.4z" fill="#34a853" opacity="0"/><path d="M172 748 L184.2 748 A12.2 12.2 0 0 0 181.9 740.9z" fill="#fbbc04"/><path d="M172 748 L159.8 748 A12.2 12.2 0 0 0 161.4 754.1z" fill="#34a853"/><circle cx="172" cy="748" r="5.6" fill="#fff"/><circle cx="172" cy="748" r="4.4" fill="#4285f4"/>
<rect x="213" y="737" width="20" height="21" rx="1.5" fill="#2b7cd3"/><rect x="213" y="744" width="20" height="7" fill="#185abd"/><rect x="213" y="751" width="20" height="7" fill="#103f91"/><rect x="208.5" y="741.5" width="12" height="12" rx="1" fill="#185abd"/><text x="210" y="751.5" font-family="Liberation Sans" font-size="9.5" font-weight="bold" fill="#fff">W</text>
<path d="M258.5 740.5h8l2 2h12v15h-22z" fill="#f5b83d"/><rect x="258.5" y="744" width="22" height="13.5" fill="#ffd35c"/><rect x="265" y="750" width="9" height="7.5" fill="#2a8ae0"/><rect x="267.5" y="752.5" width="4" height="5" fill="#ffd35c"/>
<rect x="295" y="728" width="48" height="38" fill="#2f2f2f" />
<rect x="313" y="737" width="18" height="21" rx="1.5" fill="#21a366"/><rect x="313" y="744" width="18" height="7" fill="#107c41"/><rect x="322" y="737" width="9" height="7" fill="#33c481"/><rect x="313" y="751" width="18" height="7" fill="#185c37"/><rect x="306.5" y="741.5" width="12" height="12" rx="1" fill="#107c41"/><text x="309" y="751.5" font-family="Liberation Sans" font-size="9.5" font-weight="bold" fill="#fff">X</text>
<rect x="250" y="766" width="44" height="2" fill="#76b9ed" />
<rect x="295" y="766" width="48" height="2" fill="#76b9ed" />
<rect x="397" y="766" width="40" height="2" fill="#76b9ed" />
<rect x="446" y="766" width="40" height="2" fill="#76b9ed" />
<rect x="495" y="766" width="40" height="2" fill="#76b9ed" />
<circle cx="368" cy="749" r="11" fill="#ff7139"/><circle cx="369" cy="748" r="6" fill="#9059ff"/><path d="M358 745c2-6 7-9 12-8-3 1-4 3-4 5 4-1 8 1 9 5-3-2-7-2-9 0z" fill="#ffbd4f"/>
<circle cx="417" cy="748" r="11" fill="#1ed760"/><path d="M411 744.5c4-1.3 9-1 13 1.2M411.8 748.2c3.3-1 7.5-.8 10.7 1M412.5 751.5c2.7-.8 5.7-.6 8.5.8" fill="none" stroke="#121212" stroke-width="1.6" stroke-linecap="round"/>
<circle cx="466" cy="747" r="11.5" fill="#e94335"/><path d="M466 747 L456 752.7 A11.5 11.5 0 0 0 471.7 757z" fill="#34a853"/><path d="M466 747 L477.5 747 A11.5 11.5 0 0 0 471.7 757z" fill="#fbbc04"/><path d="M466 747 L454.5 747 A11.5 11.5 0 0 0 456 752.7z" fill="#34a853"/><circle cx="466" cy="747" r="5.2" fill="#fff"/><circle cx="466" cy="747" r="4" fill="#4285f4"/><circle cx="474" cy="754" r="7" fill="#8a8a8a"/><circle cx="474" cy="754" r="4" fill="#cfcfcf"/>
<rect x="503" y="736" width="24" height="24" fill="#ffffff" />
<text x="504" y="753" font-family="Liberation Sans" font-size="12" font-weight="bold" font-style="italic" fill="#1a3a8a" textLength="21" lengthAdjust="spacingAndGlyphs">SRi</text>
<rect x="544" y="728" width="40" height="38" fill="#2f2f2f" />
<rect x="544" y="728" width="3" height="38" fill="#6b6a2a" />
<rect x="544" y="766" width="40" height="2" fill="#fff200" />
<rect x="554" y="740" width="20" height="6" fill="#eee" transform="rotate(-12 554 740)"/><path d="M556 739l3-1.5M561 738l3-1.5M566 737l3-1.5" stroke="#333" stroke-width="1.5"/><rect x="554" y="745" width="20" height="13" fill="#ddd"/><text x="555" y="756" font-family="Liberation Sans" font-size="9" font-weight="bold" fill="#d95a1f">3</text><rect x="563" y="748" width="3" height="10" fill="#6aa0e0"/><rect x="569" y="748" width="3" height="10" fill="#9bd46a"/>
<path d="M1117 751l6-6 6 6" fill="none" stroke="#fff" stroke-width="1.2"/>
<rect x="1142.5" y="743.5" width="7.5" height="9" rx="1.5" fill="none" stroke="#fff" stroke-width="1.1"/><path d="M1150 746.5l3-2v8l-3-2" fill="none" stroke="#fff" stroke-width="1.1"/><path d="M1143 741c2-1 5-1 7 0M1143 755.5c2 1 5 1 7 0" fill="none" stroke="#aaa" stroke-width="1"/>
<rect x="1166.5" y="742.5" width="12" height="9" fill="none" stroke="#fff" stroke-width="1.1"/><path d="M1172.5 751.5v3M1168 754.5h9M1163.5 742.5v12" stroke="#fff" stroke-width="1.1"/><rect x="1163.5" y="742.5" width="5" height="4" fill="none" stroke="#fff" stroke-width="1"/>
<path d="M1187.5 745.5h3l4-3.5v12l-4-3.5h-3z" fill="none" stroke="#fff" stroke-width="1.1"/><path d="M1196.5 745.5c1 1.5 1 3.5 0 5M1199 743.5c2 2.5 2 7 0 9.5M1201.5 742c2.6 3.5 2.6 9.5 0 13" fill="none" stroke="#aaa" stroke-width="1"/>
<text x="1215.7" y="751.4" font-family="Liberation Sans" font-size="12" fill="#ffffff" textLength="17.8" lengthAdjust="spacingAndGlyphs" >ESP</text>
<text x="1262.0" y="742.8" font-family="Liberation Sans" font-size="12" fill="#ffffff" textLength="26.3" lengthAdjust="spacingAndGlyphs" >14:37</text>
<text x="1252.0" y="761.0" font-family="Liberation Sans" font-size="12" fill="#ffffff" textLength="46.0" lengthAdjust="spacingAndGlyphs" >8/5/2023</text>
<path d="M1319.5 740.5h15.5v11.5h-5.5l-2.2 2.5-2.2-2.5h-5.6z" fill="none" stroke="#fff" stroke-width="1.1"/>
<rect x="1355" y="728" width="1" height="40" fill="#555" />
<g clip-path="url(#gridclip)">
<rect x="47" y="406" width="1" height="20" fill="#d9d9d9" />
<rect x="120" y="406" width="1" height="20" fill="#d9d9d9" />
<rect x="149" y="406" width="1" height="20" fill="#d9d9d9" />
<rect x="178" y="406" width="1" height="20" fill="#d9d9d9" />
<rect x="251" y="406" width="1" height="20" fill="#d9d9d9" />
<rect x="347" y="406" width="1" height="20" fill="#d9d9d9" />
<rect x="420" y="406" width="1" height="20" fill="#d9d9d9" />
<rect x="576" y="406" width="1" height="20" fill="#d9d9d9" />
<rect x="713" y="406" width="1" height="20" fill="#d9d9d9" />
<rect x="780" y="406" width="1" height="20" fill="#d9d9d9" />
<rect x="913" y="406" width="1" height="20" fill="#d9d9d9" />
<rect x="25" y="406" width="971" height="1" fill="#d9d9d9" />
<rect x="25" y="366" width="3" height="1" fill="#d9d9d9" />
<rect x="25" y="386" width="3" height="1" fill="#d9d9d9" />
<rect x="995" y="256" width="1" height="170" fill="#000" />
<rect x="1081" y="256" width="1" height="170" fill="#000" />
<rect x="1160" y="256" width="1" height="170" fill="#000" />
<rect x="1210" y="256" width="1" height="170" fill="#000" />
<rect x="1257" y="256" width="1" height="170" fill="#000" />
<rect x="1317" y="256" width="1" height="170" fill="#000" />
<rect x="995" y="406" width="343" height="1" fill="#000" />
<rect x="25" y="426" width="1313" height="1" fill="#000" />
<rect x="47" y="426" width="1" height="252" fill="#000" />
<rect x="120" y="426" width="1" height="252" fill="#000" />
<rect x="251" y="426" width="1" height="252" fill="#000" />
<rect x="347" y="426" width="1" height="252" fill="#000" />
<rect x="420" y="426" width="1" height="252" fill="#000" />
<rect x="576" y="426" width="1" height="252" fill="#000" />
<rect x="713" y="426" width="1" height="252" fill="#000" />
<rect x="780" y="426" width="1" height="252" fill="#000" />
<rect x="849" y="426" width="1" height="252" fill="#000" />
<rect x="913" y="426" width="1" height="252" fill="#000" />
<rect x="995" y="426" width="1" height="252" fill="#000" />
<rect x="1081" y="426" width="1" height="252" fill="#000" />
<rect x="1160" y="426" width="1" height="252" fill="#000" />
<rect x="1317" y="426" width="1" height="252" fill="#000" />
<rect x="149" y="494" width="1" height="184" fill="#000" />
<rect x="178" y="494" width="1" height="184" fill="#000" />
<rect x="1210" y="474" width="1" height="204" fill="#000" />
<rect x="1257" y="474" width="1" height="204" fill="#000" />
<rect x="913" y="474" width="83" height="1" fill="#000" />
<rect x="1160" y="474" width="157" height="1" fill="#000" />
<rect x="25" y="494" width="1313" height="1" fill="#9b9b9b" />
<rect x="25" y="545" width="1313" height="1" fill="#000" />
<rect x="25" y="596" width="1313" height="1" fill="#000" />
<rect x="25" y="647" width="1313" height="1" fill="#000" />
<path d="M121 495h6l-6 6z" fill="#107c10"/>
<path d="M150 495h6l-6 6z" fill="#107c10"/>
<path d="M179 495h6l-6 6z" fill="#107c10"/>
<path d="M252 495h6l-6 6z" fill="#107c10"/>
<path d="M421 495h6l-6 6z" fill="#107c10"/>
<path d="M1082 495h6l-6 6z" fill="#107c10"/>
<path d="M121 546h6l-6 6z" fill="#107c10"/>
<path d="M150 546h6l-6 6z" fill="#107c10"/>
<path d="M179 546h6l-6 6z" fill="#107c10"/>
<path d="M252 546h6l-6 6z" fill="#107c10"/>
<path d="M421 546h6l-6 6z" fill="#107c10"/>
<path d="M1082 546h6l-6 6z" fill="#107c10"/>
<path d="M121 597h6l-6 6z" fill="#107c10"/>
<path d="M150 597h6l-6 6z" fill="#107c10"/>
<path d="M179 597h6l-6 6z" fill="#107c10"/>
<path d="M252 597h6l-6 6z" fill="#107c10"/>
<path d="M421 597h6l-6 6z" fill="#107c10"/>
<path d="M121 648h6l-6 6z" fill="#107c10"/>
<path d="M150 648h6l-6 6z" fill="#107c10"/>
<path d="M179 648h6l-6 6z" fill="#107c10"/>
<path d="M252 648h6l-6 6z" fill="#107c10"/>
<path d="M421 648h6l-6 6z" fill="#107c10"/>
<path d="M1082 648h6l-6 6z" fill="#107c10"/>
<path d="M850 495h6l-6 6z" fill="#107c10"/>
<text x="65.5" y="464.0" font-family="Liberation Sans" font-size="11" fill="#000" font-weight="bold" textLength="36.5" lengthAdjust="spacingAndGlyphs" >FECHA</text>
<text x="163.0" y="456.0" font-family="Liberation Sans" font-size="11" fill="#000" font-weight="bold" textLength="45.0" lengthAdjust="spacing" >Nº DE C</text>
<text x="145.5" y="472.0" font-family="Liberation Sans" font-size="11" fill="#000" font-weight="bold" textLength="79.5" lengthAdjust="spacing" >OMPROBANTE</text>
<text x="279.0" y="456.0" font-family="Liberation Sans" font-size="11" fill="#000" font-weight="bold" textLength="42.0" lengthAdjust="spacing" >Nº RUC</text>
<text x="265.5" y="472.0" font-family="Liberation Sans" font-size="11" fill="#000" font-weight="bold" textLength="65.5" lengthAdjust="spacingAndGlyphs" clip-path="url(#cF)">PROVEEDOR</text>
<text x="370.5" y="456.0" font-family="Liberation Sans" font-size="11" fill="#000" font-weight="bold" textLength="26.5" lengthAdjust="spacing" >TIPO</text>
<text x="353.5" y="472.0" font-family="Liberation Sans" font-size="11" fill="#000" font-weight="bold" textLength="49.5" lengthAdjust="spacing" >COMPRO</text>
<text x="453.5" y="464.0" font-family="Liberation Sans" font-size="11" fill="#000" font-weight="bold" textLength="87.0" lengthAdjust="spacing" >AUTORIZACIÓN</text>
<text x="610.5" y="464.0" font-family="Liberation Sans" font-size="11" fill="#000" font-weight="bold" textLength="67.5" lengthAdjust="spacingAndGlyphs" >PROVEEDOR</text>
<text x="719.5" y="464.0" font-family="Liberation Sans" font-size="11" fill="#000" font-weight="bold" textLength="50.5" lengthAdjust="spacingAndGlyphs" >BASE 12%</text>
<text x="791.5" y="464.0" font-family="Liberation Sans" font-size="11" fill="#000" font-weight="bold" textLength="48.5" lengthAdjust="spacingAndGlyphs" >BASE 0%</text>
<text x="872.0" y="464.0" font-family="Liberation Sans" font-size="11" fill="#000" font-weight="bold" textLength="19.0" lengthAdjust="spacing" >IVA</text>
<text x="922.5" y="455.5" font-family="Liberation Sans" font-size="11" fill="#000" font-weight="bold" textLength="63.5" lengthAdjust="spacing" >SUBTO-TAL</text>
<text x="944.5" y="489.0" font-family="Liberation Sans" font-size="11" fill="#000" font-weight="bold" textLength="21.0" lengthAdjust="spacing" >332</text>
<text x="1021.0" y="464.0" font-family="Liberation Sans" font-size="11" fill="#000" font-weight="bold" textLength="35.5" lengthAdjust="spacingAndGlyphs" >TOTAL</text>
<text x="1114.5" y="456.0" font-family="Liberation Sans" font-size="11" fill="#000" font-weight="bold" textLength="14.0" lengthAdjust="spacing" >Nº</text>
<text x="1088.5" y="472.0" font-family="Liberation Sans" font-size="11" fill="#000" font-weight="bold" textLength="61.5" lengthAdjust="spacingAndGlyphs" >RETENCION</text>
<text x="1194.5" y="454.0" font-family="Liberation Sans" font-size="11" fill="#000" font-weight="bold" textLength="89.0" lengthAdjust="spacing" >RETENCION IVA</text>
<text x="1185.5" y="489.0" font-family="Liberation Sans" font-size="11" fill="#000" font-weight="bold" textLength="22.5" lengthAdjust="spacing" >30%</text>
<text x="1233.0" y="489.0" font-family="Liberation Sans" font-size="11" fill="#000" font-weight="bold" textLength="22.0" lengthAdjust="spacingAndGlyphs" >70%</text>
<text x="1285.5" y="489.0" font-family="Liberation Sans" font-size="11" fill="#000" font-weight="bold" textLength="29.5" lengthAdjust="spacing" >100%</text>
<text x="1327.5" y="454.0" font-family="Liberation Sans" font-size="11" fill="#000" font-weight="bold" text-anchor="start" >RETENCION</text>
<rect x="30.5" y="456.5" width="16" height="16" fill="#eef0f4" stroke="#a9adb5" stroke-width="1"/>
<path d="M34.5 463h8l-4 4z" fill="#666"/>
<rect x="103.5" y="456.5" width="16" height="16" fill="#eef0f4" stroke="#a9adb5" stroke-width="1"/>
<path d="M107.5 463h8l-4 4z" fill="#666"/>
<rect x="234.5" y="456.5" width="16" height="16" fill="#eef0f4" stroke="#a9adb5" stroke-width="1"/>
<path d="M238.5 463h8l-4 4z" fill="#666"/>
<rect x="331.5" y="456.5" width="16" height="16" fill="#eef0f4" stroke="#a9adb5" stroke-width="1"/>
<path d="M335.5 463h8l-4 4z" fill="#666"/>
<rect x="403.5" y="456.5" width="16" height="16" fill="#eef0f4" stroke="#a9adb5" stroke-width="1"/>
<path d="M407.5 463h8l-4 4z" fill="#666"/>
<rect x="559.5" y="456.5" width="16" height="16" fill="#eef0f4" stroke="#a9adb5" stroke-width="1"/>
<path d="M563.5 463h8l-4 4z" fill="#666"/>
<rect x="696.5" y="456.5" width="16" height="16" fill="#eef0f4" stroke="#a9adb5" stroke-width="1"/>
<path d="M700.5 463h8l-4 4z" fill="#666"/>
<rect x="763.5" y="456.5" width="16" height="16" fill="#eef0f4" stroke="#a9adb5" stroke-width="1"/>
<path d="M767.5 463h8l-4 4z" fill="#666"/>
<rect x="832.5" y="456.5" width="16" height="16" fill="#eef0f4" stroke="#a9adb5" stroke-width="1"/>
<path d="M836.5 463h8l-4 4z" fill="#666"/>
<rect x="896.5" y="456.5" width="16" height="16" fill="#eef0f4" stroke="#a9adb5" stroke-width="1"/>
<path d="M900.5 463h8l-4 4z" fill="#666"/>
<rect x="978.5" y="456.5" width="16" height="16" fill="#eef0f4" stroke="#a9adb5" stroke-width="1"/>
<path d="M982.5 463h8l-4 4z" fill="#666"/>
<rect x="1064.5" y="456.5" width="16" height="16" fill="#eef0f4" stroke="#a9adb5" stroke-width="1"/>
<path d="M1068.5 463h8l-4 4z" fill="#666"/>
<rect x="1143.5" y="456.5" width="16" height="16" fill="#eef0f4" stroke="#a9adb5" stroke-width="1"/>
<path d="M1147.5 463h8l-4 4z" fill="#666"/>
<rect x="1300.5" y="456.5" width="16" height="16" fill="#eef0f4" stroke="#a9adb5" stroke-width="1"/>
<path d="M1304.5 463h8l-4 4z" fill="#666"/>
<text x="1019.0" y="326.0" font-family="Liberation Sans" font-size="11" fill="#000" font-weight="bold" textLength="40.0" lengthAdjust="spacingAndGlyphs" >Botellas</text>
<text x="1005.5" y="343.0" font-family="Liberation Sans" font-size="11" fill="#000" font-weight="bold" textLength="65.5" lengthAdjust="spacingAndGlyphs" >plásticas 1%</text>
<text x="1090.0" y="274.6" font-family="Liberation Sans" font-size="11" fill="#000" font-weight="bold" textLength="61.5" lengthAdjust="spacingAndGlyphs" >Actividades</text>
<text x="1113.5" y="291.6" font-family="Liberation Sans" font-size="11" fill="#000" font-weight="bold" textLength="13.5" lengthAdjust="spacing" >de</text>
<text x="1085.0" y="308.6" font-family="Liberation Sans" font-size="11" fill="#000" font-weight="bold" textLength="70.0" lengthAdjust="spacing" >construcción</text>
<text x="1100.0" y="325.8" font-family="Liberation Sans" font-size="11" fill="#000" font-weight="bold" textLength="41.5" lengthAdjust="spacing" >de obra</text>
<text x="1096.5" y="342.8" font-family="Liberation Sans" font-size="11" fill="#000" font-weight="bold" textLength="48.5" lengthAdjust="spacing" >materias,</text>
<text x="1093.5" y="359.9" font-family="Liberation Sans" font-size="11" fill="#000" font-weight="bold" textLength="53.5" lengthAdjust="spacing" >inmueble,</text>
<text x="1085.0" y="376.9" font-family="Liberation Sans" font-size="11" fill="#000" font-weight="bold" textLength="70.0" lengthAdjust="spacing" >urbanización</text>
<text x="1107.0" y="393.9" font-family="Liberation Sans" font-size="11" fill="#000" font-weight="bold" textLength="29.5" lengthAdjust="spacingAndGlyphs" >1,75%</text>
<text x="1164.5" y="308.8" font-family="Liberation Sans" font-size="11" fill="#000" font-weight="bold" textLength="42.0" lengthAdjust="spacing" >Cuando</text>
<text x="1167.0" y="325.7" font-family="Liberation Sans" font-size="11" fill="#000" font-weight="bold" textLength="36.0" lengthAdjust="spacing" >no hay</text>
<text x="1162.5" y="342.7" font-family="Liberation Sans" font-size="11" fill="#000" font-weight="bold" textLength="44.5" lengthAdjust="spacing" >retenció</text>
<text x="1181.5" y="359.7" font-family="Liberation Sans" font-size="11" fill="#000" font-weight="bold" textLength="7.0" lengthAdjust="spacing" >n</text>
<text x="1215.5" y="292.2" font-family="Liberation Sans" font-size="11" fill="#000" font-weight="bold" textLength="37.5" lengthAdjust="spacingAndGlyphs" >100 % y</text>
<text x="1224.0" y="308.8" font-family="Liberation Sans" font-size="11" fill="#000" font-weight="bold" textLength="21.0" lengthAdjust="spacingAndGlyphs" >1%.-</text>
<text x="1214.5" y="325.7" font-family="Liberation Sans" font-size="11" fill="#000" font-weight="bold" textLength="38.5" lengthAdjust="spacingAndGlyphs" >Regime</text>
<text x="1231.0" y="342.7" font-family="Liberation Sans" font-size="11" fill="#000" font-weight="bold" textLength="7.0" lengthAdjust="spacing" >n</text>
<text x="1215.5" y="359.7" font-family="Liberation Sans" font-size="11" fill="#000" font-weight="bold" textLength="37.0" lengthAdjust="spacing" >microe</text>
<text x="1214.5" y="376.7" font-family="Liberation Sans" font-size="11" fill="#000" font-weight="bold" textLength="39.0" lengthAdjust="spacingAndGlyphs" >mpresa</text>
<text x="1262.5" y="302.4" font-family="Liberation Sans" font-size="11" fill="#000" font-weight="bold" textLength="47.5" lengthAdjust="spacingAndGlyphs" >Productos</text>
<text x="1263.5" y="319.0" font-family="Liberation Sans" font-size="11" fill="#000" font-weight="bold" textLength="46.5" lengthAdjust="spacingAndGlyphs" >agricoilas</text>
<text x="1284.0" y="335.5" font-family="Liberation Sans" font-size="11" fill="#000" font-weight="bold" textLength="5.5" lengthAdjust="spacingAndGlyphs" >o</text>
<text x="1263.0" y="351.5" font-family="Liberation Sans" font-size="11" fill="#000" font-weight="bold" textLength="46.5" lengthAdjust="spacingAndGlyphs" >Pecuarios</text>
<text x="1279.0" y="368.0" font-family="Liberation Sans" font-size="11" fill="#000" font-weight="bold" textLength="16.0" lengthAdjust="spacing" >1%</text>
<text x="1321.0" y="292.0" font-family="Liberation Sans" font-size="11" fill="#000" font-weight="bold" text-anchor="start" >Trans</text>
<text x="1323.0" y="308.8" font-family="Liberation Sans" font-size="11" fill="#000" font-weight="bold" text-anchor="start" >ena</text>
<text x="1335.0" y="325.7" font-family="Liberation Sans" font-size="11" fill="#000" font-weight="bold" text-anchor="start" >de</text>
<text x="1326.0" y="342.7" font-family="Liberation Sans" font-size="11" fill="#000" font-weight="bold" text-anchor="start" >bienes</text>
<text x="1319.0" y="359.7" font-family="Liberation Sans" font-size="11" fill="#000" font-weight="bold" text-anchor="start" >muebles</text>
<text x="1327.0" y="376.7" font-family="Liberation Sans" font-size="11" fill="#000" font-weight="bold" text-anchor="start" >1,75%</text>
<text x="1023.0" y="420.6" font-family="Liberation Sans" font-size="11.5" fill="#000" font-weight="bold" textLength="30.0" lengthAdjust="spacing" >343C</text>
<text x="1107.0" y="420.6" font-family="Liberation Sans" font-size="11.5" fill="#000" font-weight="bold" textLength="28.0" lengthAdjust="spacing" >343B</text>
<text x="1175.0" y="420.6" font-family="Liberation Sans" font-size="11.5" fill="#000" font-weight="bold" textLength="20.0" lengthAdjust="spacing" >332</text>
<text x="1223.5" y="420.6" font-family="Liberation Sans" font-size="11.5" fill="#000" font-weight="bold" textLength="20.5" lengthAdjust="spacing" >343</text>
<text x="1271.5" y="420.6" font-family="Liberation Sans" font-size="11.5" fill="#000" font-weight="bold" textLength="32.0" lengthAdjust="spacing" >312A</text>
<text x="1333.0" y="420.6" font-family="Liberation Sans" font-size="11.5" fill="#000" font-weight="bold" textLength="12.0" lengthAdjust="spacing" >3</text>
<text x="815.5" y="421.3" font-family="Liberation Sans" font-size="11.5" fill="#000" font-weight="bold" textLength="62.5" lengthAdjust="spacing" >TOTAL 332</text>
<text x="947.0" y="421.3" font-family="Liberation Sans" font-size="11.5" fill="#000" font-weight="bold" textLength="45.5" lengthAdjust="spacing" >6080.22</text>
<text x="612.0" y="327.4" font-family="Liberation Sans" font-size="12" fill="#000" font-weight="bold" textLength="349.5" lengthAdjust="spacing" >REGISTRO DE FACTURAS DE COMPRA Y RETENCIONES A</text>
<text x="695.5" y="344.4" font-family="Liberation Sans" font-size="12" fill="#000" font-weight="bold" textLength="181.5" lengthAdjust="spacingAndGlyphs" >PROVEEDORES DE ABRIL 2023</text>
<text x="45.3" y="525.0" font-family="Liberation Sans" font-size="12" fill="#000" text-anchor="end" >4</text>
<text x="66.5" y="525.0" font-family="Liberation Sans" font-size="12" fill="#000" textLength="51.3" lengthAdjust="spacing" >4/4/2023</text>
<text x="123.5" y="525.0" font-family="Liberation Sans" font-size="12" fill="#000" textLength="19.5" lengthAdjust="spacingAndGlyphs" >001</text>
<text x="152.2" y="525.0" font-family="Liberation Sans" font-size="12" fill="#000" textLength="20.0" lengthAdjust="spacingAndGlyphs" >100</text>
<text x="181.4" y="525.0" font-family="Liberation Sans" font-size="12" fill="#000" textLength="61.8" lengthAdjust="spacing" >000000015</text>
<text x="255.0" y="525.0" font-family="Liberation Sans" font-size="12" fill="#000" textLength="88.4" lengthAdjust="spacing" >2300255862001</text>
<text x="350.2" y="525.0" font-family="Liberation Sans" font-size="12" fill="#000" textLength="58.0" lengthAdjust="spacingAndGlyphs" >FACT. ELEC.</text>
<text x="424.3" y="508.1" font-family="Liberation Sans" font-size="12" fill="#000" textLength="144.9" lengthAdjust="spacing" >040420230123002558620</text>
<text x="424.3" y="525.1" font-family="Liberation Sans" font-size="12" fill="#000" textLength="144.9" lengthAdjust="spacing" >012001100000000015123</text>
<text x="424.3" y="542.1" font-family="Liberation Sans" font-size="12" fill="#000" textLength="47.7" lengthAdjust="spacing" >4567814</text>
<text x="579.5" y="516.0" font-family="Liberation Sans" font-size="12" fill="#000" textLength="95.8" lengthAdjust="spacingAndGlyphs" >CEDEÑO ORDOÑEZ</text>
<text x="579.5" y="533.3" font-family="Liberation Sans" font-size="12" fill="#000" textLength="67.9" lengthAdjust="spacingAndGlyphs" >ISRAEL DAVID</text>
<text x="796.8" y="525.0" font-family="Liberation Sans" font-size="12" fill="#000" textLength="36.5" lengthAdjust="spacingAndGlyphs" >300.00</text>
<text x="870.4" y="525.0" font-family="Liberation Sans" font-size="12" fill="#000" textLength="22.8" lengthAdjust="spacingAndGlyphs" >0.00</text>
<text x="936.7" y="525.0" font-family="Liberation Sans" font-size="12" fill="#000" textLength="36.5" lengthAdjust="spacingAndGlyphs" >300.00</text>
<text x="1020.7" y="525.0" font-family="Liberation Sans" font-size="12" fill="#000" textLength="36.6" lengthAdjust="spacingAndGlyphs" >300.00</text>
<text x="1089.0" y="525.0" font-family="Liberation Sans" font-size="12" fill="#000" textLength="63.0" lengthAdjust="spacing" >000001210</text>
<text x="1277.0" y="525.0" font-family="Liberation Sans" font-size="12" fill="#000" textLength="22.3" lengthAdjust="spacingAndGlyphs" >0.00</text>
<text x="1328.7" y="525.0" font-family="Liberation Sans" font-size="12" fill="#000" text-anchor="start" >343</text>
<text x="45.3" y="576.0" font-family="Liberation Sans" font-size="12" fill="#000" text-anchor="end" >5</text>
<text x="66.5" y="576.0" font-family="Liberation Sans" font-size="12" fill="#000" textLength="51.3" lengthAdjust="spacing" >4/4/2023</text>
<text x="123.5" y="576.0" font-family="Liberation Sans" font-size="12" fill="#000" textLength="19.5" lengthAdjust="spacingAndGlyphs" >001</text>
<text x="152.2" y="576.0" font-family="Liberation Sans" font-size="12" fill="#000" textLength="20.0" lengthAdjust="spacingAndGlyphs" >100</text>
<text x="181.4" y="576.0" font-family="Liberation Sans" font-size="12" fill="#000" textLength="61.8" lengthAdjust="spacing" >000000014</text>
<text x="255.0" y="576.0" font-family="Liberation Sans" font-size="12" fill="#000" textLength="88.4" lengthAdjust="spacing" >2300255862001</text>
<text x="350.2" y="576.0" font-family="Liberation Sans" font-size="12" fill="#000" textLength="58.0" lengthAdjust="spacingAndGlyphs" >FACT. ELEC.</text>
<text x="424.3" y="559.1" font-family="Liberation Sans" font-size="12" fill="#000" textLength="144.9" lengthAdjust="spacing" >040420230123002558620</text>
<text x="424.3" y="576.1" font-family="Liberation Sans" font-size="12" fill="#000" textLength="144.9" lengthAdjust="spacing" >012001100000000014123</text>
<text x="424.3" y="593.1" font-family="Liberation Sans" font-size="12" fill="#000" textLength="47.7" lengthAdjust="spacing" >4567819</text>
<text x="579.5" y="567.0" font-family="Liberation Sans" font-size="12" fill="#000" textLength="95.8" lengthAdjust="spacingAndGlyphs" >CEDEÑO ORDOÑEZ</text>
<text x="579.5" y="584.3" font-family="Liberation Sans" font-size="12" fill="#000" textLength="67.9" lengthAdjust="spacingAndGlyphs" >ISRAEL DAVID</text>
<text x="796.8" y="576.0" font-family="Liberation Sans" font-size="12" fill="#000" textLength="36.5" lengthAdjust="spacingAndGlyphs" >318.00</text>
<text x="870.4" y="576.0" font-family="Liberation Sans" font-size="12" fill="#000" textLength="22.8" lengthAdjust="spacingAndGlyphs" >0.00</text>
<text x="936.7" y="576.0" font-family="Liberation Sans" font-size="12" fill="#000" textLength="36.5" lengthAdjust="spacingAndGlyphs" >318.00</text>
<text x="1020.7" y="576.0" font-family="Liberation Sans" font-size="12" fill="#000" textLength="36.6" lengthAdjust="spacingAndGlyphs" >318.00</text>
<text x="1089.0" y="576.0" font-family="Liberation Sans" font-size="12" fill="#000" textLength="63.0" lengthAdjust="spacing" >000001211</text>
<text x="1277.0" y="576.0" font-family="Liberation Sans" font-size="12" fill="#000" textLength="22.3" lengthAdjust="spacingAndGlyphs" >0.00</text>
<text x="1328.7" y="576.0" font-family="Liberation Sans" font-size="12" fill="#000" text-anchor="start" >343</text>
<text x="45.3" y="627.0" font-family="Liberation Sans" font-size="12" fill="#000" text-anchor="end" >6</text>
<text x="66.5" y="627.0" font-family="Liberation Sans" font-size="12" fill="#000" textLength="51.3" lengthAdjust="spacing" >5/4/2023</text>
<text x="123.5" y="627.0" font-family="Liberation Sans" font-size="12" fill="#000" textLength="19.5" lengthAdjust="spacingAndGlyphs" >017</text>
<text x="152.2" y="627.0" font-family="Liberation Sans" font-size="12" fill="#000" textLength="20.0" lengthAdjust="spacingAndGlyphs" >032</text>
<text x="181.4" y="627.0" font-family="Liberation Sans" font-size="12" fill="#000" textLength="61.8" lengthAdjust="spacing" >000008329</text>
<text x="255.0" y="627.0" font-family="Liberation Sans" font-size="12" fill="#000" textLength="88.4" lengthAdjust="spacing" >1760002600001</text>
<text x="350.2" y="627.0" font-family="Liberation Sans" font-size="12" fill="#000" textLength="58.0" lengthAdjust="spacingAndGlyphs" >FACT. ELEC.</text>
<text x="424.3" y="610.1" font-family="Liberation Sans" font-size="12" fill="#000" textLength="144.9" lengthAdjust="spacing" >050420230117600026000</text>
<text x="424.3" y="627.1" font-family="Liberation Sans" font-size="12" fill="#000" textLength="144.9" lengthAdjust="spacing" >012017032000008329123</text>
<text x="424.3" y="644.1" font-family="Liberation Sans" font-size="12" fill="#000" textLength="47.7" lengthAdjust="spacing" >4567816</text>
<text x="579.5" y="618.0" font-family="Liberation Sans" font-size="12" fill="#000" textLength="107.1" lengthAdjust="spacingAndGlyphs" >BANCO CENTRAL DEL</text>
<text x="579.5" y="635.3" font-family="Liberation Sans" font-size="12" fill="#000" textLength="50.1" lengthAdjust="spacingAndGlyphs" >ECUADOR</text>
<text x="803.7" y="627.0" font-family="Liberation Sans" font-size="12" fill="#000" textLength="22.8" lengthAdjust="spacingAndGlyphs" >0.90</text>
<text x="870.4" y="627.0" font-family="Liberation Sans" font-size="12" fill="#000" textLength="22.8" lengthAdjust="spacingAndGlyphs" >0.00</text>
<text x="943.6" y="627.0" font-family="Liberation Sans" font-size="12" fill="#000" textLength="22.8" lengthAdjust="spacingAndGlyphs" >0.90</text>
<text x="1027.6" y="627.0" font-family="Liberation Sans" font-size="12" fill="#000" textLength="22.8" lengthAdjust="spacingAndGlyphs" >0.90</text>
<text x="1100.6" y="627.0" font-family="Liberation Sans" font-size="12" fill="#000" textLength="42.1" lengthAdjust="spacingAndGlyphs" >SIN. RET</text>
<text x="1277.0" y="627.0" font-family="Liberation Sans" font-size="12" fill="#000" textLength="22.3" lengthAdjust="spacingAndGlyphs" >0.00</text>
<text x="1333.7" y="627.0" font-family="Liberation Sans" font-size="12" fill="#000" text-anchor="start" >343</text>
<text x="45.3" y="678.0" font-family="Liberation Sans" font-size="12" fill="#000" text-anchor="end" >7</text>
<text x="66.5" y="678.0" font-family="Liberation Sans" font-size="12" fill="#000" textLength="51.3" lengthAdjust="spacing" >5/4/2023</text>
<text x="123.5" y="678.0" font-family="Liberation Sans" font-size="12" fill="#000" textLength="19.5" lengthAdjust="spacingAndGlyphs" >001</text>
<text x="152.2" y="678.0" font-family="Liberation Sans" font-size="12" fill="#000" textLength="20.0" lengthAdjust="spacingAndGlyphs" >105</text>
<text x="181.4" y="678.0" font-family="Liberation Sans" font-size="12" fill="#000" textLength="61.8" lengthAdjust="spacing" >000000012</text>
<text x="255.0" y="678.0" font-family="Liberation Sans" font-size="12" fill="#000" textLength="88.4" lengthAdjust="spacing" >2390031133001</text>
<text x="350.2" y="678.0" font-family="Liberation Sans" font-size="12" fill="#000" textLength="58.0" lengthAdjust="spacingAndGlyphs" >FACT. ELEC.</text>
<text x="424.3" y="661.1" font-family="Liberation Sans" font-size="12" fill="#000" textLength="144.9" lengthAdjust="spacing" >050420230123900311330</text>
<text x="424.3" y="678.1" font-family="Liberation Sans" font-size="12" fill="#000" textLength="144.9" lengthAdjust="spacing" >012001105000000012123</text>
<text x="424.3" y="695.1" font-family="Liberation Sans" font-size="12" fill="#000" textLength="47.7" lengthAdjust="spacing" >4567818</text>
<text x="579.5" y="677.7" font-family="Liberation Sans" font-size="12" fill="#000" textLength="90.3" lengthAdjust="spacingAndGlyphs" >CONCORCITY S.A.</text>
<text x="800.3" y="678.0" font-family="Liberation Sans" font-size="12" fill="#000" textLength="29.7" lengthAdjust="spacingAndGlyphs" >80.00</text>
<text x="870.4" y="678.0" font-family="Liberation Sans" font-size="12" fill="#000" textLength="22.8" lengthAdjust="spacingAndGlyphs" >0.00</text>
<text x="940.2" y="678.0" font-family="Liberation Sans" font-size="12" fill="#000" textLength="29.7" lengthAdjust="spacingAndGlyphs" >80.00</text>
<text x="1024.2" y="678.0" font-family="Liberation Sans" font-size="12" fill="#000" textLength="29.7" lengthAdjust="spacingAndGlyphs" >80.00</text>
<text x="1089.0" y="678.0" font-family="Liberation Sans" font-size="12" fill="#000" textLength="63.0" lengthAdjust="spacing" >000001212</text>
<text x="1277.0" y="678.0" font-family="Liberation Sans" font-size="12" fill="#000" textLength="22.3" lengthAdjust="spacingAndGlyphs" >0.00</text>
<text x="1333.7" y="678.0" font-family="Liberation Sans" font-size="12" fill="#000" text-anchor="start" >343</text>
<g>
<rect x="27" y="261" width="558" height="145.5" fill="#ffffff" />
<path d="M27 261H93.5L27 397Z" fill="#0a6db5"/>
<path d="M61 261H80L54.5 315H35Z" fill="#f7e723"/>
<path d="M281 261H585V407H210Z" fill="#008f2f"/>
<path d="M288.5 261H336L259.5 423H210Z" fill="#dfe000"/>
<path d="M555.7 349H568L542.3 405H528.9Z" fill="#ffec00"/>
<path d="M570.3 349H583L556.6 405H544Z" fill="#ffffff"/>
<path d="M585 350V376.6L571 405H558.6Z" fill="#9cbf1b"/>
<text x="361.0" y="297.6" font-family="Liberation Sans" font-size="15.5" fill="#e4eee4" textLength="149.0" lengthAdjust="spacingAndGlyphs" >Acuerdo Ministerial Nº 1359</text>
<text x="361.0" y="315.3" font-family="Liberation Sans" font-size="15.5" fill="#e4eee4" textLength="114.0" lengthAdjust="spacingAndGlyphs" >RUC : 1768120600001</text>
<text x="370.0" y="344.0" font-family="Liberation Sans" font-size="13" fill="#e4eee4" textLength="99.0" lengthAdjust="spacingAndGlyphs" >(02)2773220 / 2773300</text>
<text x="370.0" y="367.6" font-family="Liberation Sans" font-size="13" fill="#e4eee4" textLength="155.0" lengthAdjust="spacingAndGlyphs" >gadprvallehermoso@hotmail.com</text>
<text x="370.0" y="389.4" font-family="Liberation Sans" font-size="13" fill="#e4eee4" textLength="122.6" lengthAdjust="spacingAndGlyphs" >www.vallehermoso.gob.ec</text>
<path d="M356 336.5c1.5-.8 2.5-.5 3 .8l.6 1.6c.3.8-.6 1.3-1 1.6.5 1.2 1.2 2 2.2 2.6.5-.4 1-1.1 1.8-.8l1.4.8c.8.6.6 1.6-.4 2.4-2.5 1.5-7-2.5-7.8-6.4-.2-1.2 0-2.2.2-2.6z" fill="#fff"/>
<rect x="354.5" y="360" width="8.5" height="7.5" fill="#fff"/><path d="M354.5 360l4.25 4 4.25-4M354.5 367.5l3-3M363 367.5l-3-3" stroke="#008f2f" stroke-width="1" fill="none"/>
<path d="M357.5 380.5v11l2.5-2.5 2 3.5 1.3-.8-2-3.4h3.5z" fill="#fff"/>
<defs><clipPath id="logoclip"><rect x="60" y="280" width="150" height="106.5"/></clipPath></defs>
<g clip-path="url(#logoclip)">
<ellipse cx="137" cy="367" rx="69" ry="80" fill="#1273be"/>
<path d="M130 341 L141 331 L153 341Z" fill="#f5b21b"/>
<defs><clipPath id="elclip"><ellipse cx="137" cy="367" rx="69" ry="80"/></clipPath></defs>
<path clip-path="url(#elclip)" d="M68 368 C 85 350, 100 336, 113 330 C 122 334, 130 340, 138 344 C 146 338, 152 333, 159 331 C 175 338, 192 354, 207 372 V387 H68Z" fill="#2fa63a"/>
<path d="M127 366 C 140 360, 160 362, 172 356 C 176 362, 184 372, 186 387 H127 C 130 380, 125 372, 127 366Z" fill="#4b9ad8"/>
<path d="M116 348 C 128 352, 150 352, 160 356 C 166 362, 150 366, 140 372 L146 372 C 156 366, 172 362, 166 354 C 156 348, 132 348, 122 346Z" fill="#4b9ad8"/>
<path d="M112 331 C 121 336, 120 344, 116 348 C 128 352, 150 352, 160 356 C 166 362, 150 366, 138 372 C 130 378, 124 382, 124 387" fill="none" stroke="#f2c62a" stroke-width="1.8"/>
<g transform="translate(132 317)"><rect x="-2.8" y="-11.5" width="5.6" height="7" fill="#f7a21b" transform="rotate(0)"/><rect x="-2.8" y="-11.5" width="5.6" height="7" fill="#f7a21b" transform="rotate(45)"/><rect x="-2.8" y="-11.5" width="5.6" height="7" fill="#f7a21b" transform="rotate(90)"/><rect x="-2.8" y="-11.5" width="5.6" height="7" fill="#f7a21b" transform="rotate(135)"/><rect x="-2.8" y="-11.5" width="5.6" height="7" fill="#f7a21b" transform="rotate(180)"/><rect x="-2.8" y="-11.5" width="5.6" height="7" fill="#f7a21b" transform="rotate(225)"/><rect x="-2.8" y="-11.5" width="5.6" height="7" fill="#f7a21b" transform="rotate(270)"/><rect x="-2.8" y="-11.5" width="5.6" height="7" fill="#f7a21b" transform="rotate(315)"/><circle r="6.8" fill="#f7a21b"/><circle r="4.6" fill="#f8e81c"/><circle r="2.8" fill="#1273be"/></g>
<path d="M176 360 L177 330" stroke="#4f8f3e" stroke-width="2.4"/>
<g fill="#a6d292"><ellipse cx="168" cy="324" rx="7" ry="4"/><ellipse cx="185" cy="324" rx="7" ry="4"/><ellipse cx="177" cy="317" rx="3.5" ry="4"/><ellipse cx="166" cy="342" rx="5" ry="5"/><ellipse cx="188" cy="345" rx="4.5" ry="5"/><ellipse cx="171" cy="333" rx="5" ry="4"/><ellipse cx="183" cy="334" rx="5" ry="4"/></g>
<g fill="none" stroke="#d8efcc" stroke-width="1.2" stroke-linecap="round"><path d="M177 330 C 170 322, 164 320, 160 326"/><path d="M177 330 C 172 318, 176 314, 178 314"/><path d="M177 330 C 184 320, 190 322, 192 328"/><path d="M176 340 C 168 336, 163 340, 162 348"/><path d="M177 338 C 186 336, 191 342, 191 350"/></g>
<path d="M78 352 C 84 349, 91 354, 94 364 C 86 365, 79 360, 78 352Z" fill="#6f9a55"/>
<path d="M82 360 C 79 348, 84 340, 90 337 C 94 346, 96 354, 94 362 Z" fill="#f08a22"/>
<path d="M88 361 C 86 346, 90 336, 96 330 C 100 342, 102 352, 98 362 Z" fill="#e4571c"/>
<path d="M92 360 C 91 350, 93 342, 97 337 C 99 346, 100 354, 98 360 Z" fill="#f5a623"/>
<ellipse cx="102" cy="346" rx="6.3" ry="9.5" fill="#f0b030"/>
<path d="M96.5 337 L97 324 L100 333 L102 321 L104 333 L107 325 L107.5 337Z" fill="#4aa042"/>
<path d="M74 386 C 95 360, 118 346, 138 346 C 160 346, 185 362, 202 384" fill="none" stroke="#8b3a13" stroke-width="3.6"/>
<rect x="74" y="374" width="129" height="4.5" fill="#8b3a13"/>
<path d="M90 374 L96 362 M104 374 L100 354 M112 374 L118 350 M124 374 L120 347 M136 374 L140 346 M148 374 L144 347 M160 374 L164 350 M172 374 L168 353 M184 374 L188 362" stroke="#8b3a13" stroke-width="1.2"/>
<path d="M76 386 L86 378 M196 386 L190 378" stroke="#8b3a13" stroke-width="3"/>
</g>
<text x="71.0" y="409.3" font-family="Liberation Sans" font-size="26" fill="#e1261c" textLength="13.6" lengthAdjust="spacingAndGlyphs" >V</text>
<text x="85.5" y="409.3" font-family="Liberation Sans" font-size="21" fill="#e1261c" textLength="32.5" lengthAdjust="spacingAndGlyphs" >alle</text>
<text x="120.7" y="409.3" font-family="Liberation Sans" font-size="26" fill="#e1261c" textLength="17.5" lengthAdjust="spacingAndGlyphs" >H</text>
<text x="139.5" y="409.3" font-family="Liberation Sans" font-size="19.5" fill="#e1261c" textLength="65.5" lengthAdjust="spacing" >ermoso</text>
<text x="140.0" y="397.4" font-family="Liberation Sans" font-size="9.5" fill="#3a8a3c" font-weight="bold" textLength="65.0" lengthAdjust="spacingAndGlyphs" >GAD PARROQUIAL</text>
</g>
</g>
<rect x="0" y="678" width="1339" height="1" fill="#a6a6a6" />
<rect x="1338" y="256" width="1" height="423" fill="#a6a6a6" />
</svg>
</body></html>
